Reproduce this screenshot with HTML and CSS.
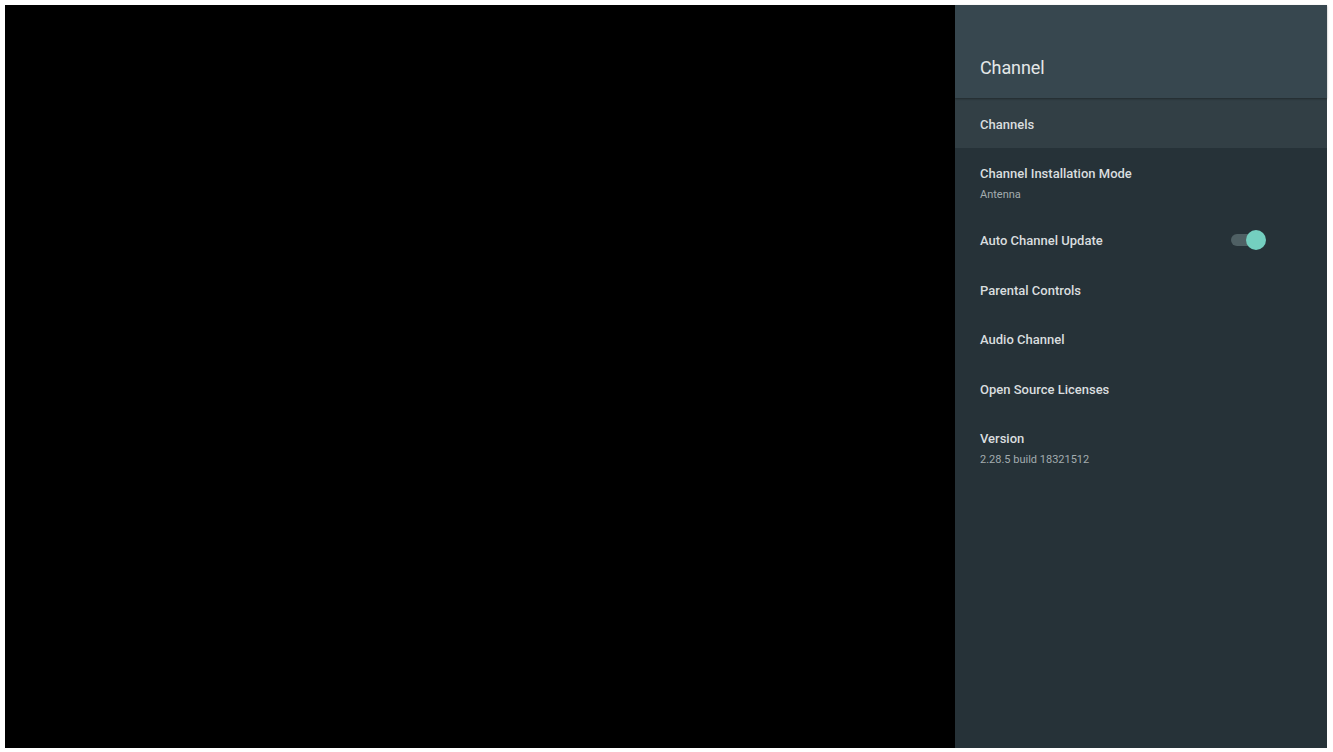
FILE: index.html
```html
<!DOCTYPE html>
<html lang="en">
<head>
    <meta charset="UTF-8">
    <title>Channel</title>
    <link rel="stylesheet" href="styles.css">
</head>
<body>
    <div class="screen">
        <div class="video"></div>
        <div class="panel">
            <div class="panel-header">
                <h2>Channel</h2>
            </div>
            <div class="menu">
                <div class="menu-item selected">
                    <div class="item-title">Channels</div>
                </div>
                <div class="menu-item two-line">
                    <div class="item-title">Channel Installation Mode</div>
                    <div class="item-sub">Antenna</div>
                </div>
                <div class="menu-item with-switch">
                    <div class="item-title">Auto Channel Update</div>
                    <div class="switch on"><span class="knob"></span></div>
                </div>
                <div class="menu-item">
                    <div class="item-title">Parental Controls</div>
                </div>
                <div class="menu-item">
                    <div class="item-title">Audio Channel</div>
                </div>
                <div class="menu-item">
                    <div class="item-title">Open Source Licenses</div>
                </div>
                <div class="menu-item two-line">
                    <div class="item-title">Version</div>
                    <div class="item-sub">2.28.5 build 18321512</div>
                </div>
            </div>
        </div>
    </div>
</body>
</html>
```

FILE: styles.css
```css
html, body {
    margin: 0;
    background: #fff;
}
body {
    padding: 5px 6px 4px 5px;
    font-family: Roboto, "Noto Sans", sans-serif;
}
.screen {
    display: flex;
    width: 1322px;
    height: 743px;
    background: #000;
}
.video {
    flex: 1;
}
.panel {
    width: 372px;
    background: #263238;
    display: flex;
    flex-direction: column;
}
.panel-header {
    height: 93px;
    background: #37474f;
    box-shadow: 0 1px 2px rgba(0,0,0,0.35);
    display: flex;
    align-items: center;
    padding: 0 25px;
    position: relative;
    z-index: 1;
}
.panel-header h2 {
    margin: 0;
    padding-top: 32px;
    font-size: 18px;
    font-weight: 400;
    color: #e3e7e8;
    letter-spacing: -0.1px;
}
.menu {
    display: flex;
    flex-direction: column;
}
.menu-item {
    height: 49.5px;
    box-sizing: border-box;
    padding: 3px 25px 0;
    display: flex;
    flex-direction: column;
    justify-content: center;
}
.menu-item.selected {
    height: 50px;
    background: #323f45;
}
.menu-item.two-line {
    height: 67px;
    padding-top: 5px;
}
.menu-item.with-switch {
    flex-direction: row;
    align-items: center;
    justify-content: space-between;
    padding-right: 66px;
}
.item-title {
    font-size: 13px;
    font-weight: 500;
    color: #d9dddf;
    line-height: 18px;
}
.item-sub {
    font-size: 11px;
    color: #a3acaf;
    line-height: 16px;
    margin-top: 4px;
}
.switch {
    position: relative;
    width: 30px;
    height: 12px;
    margin-top: -2px;
    border-radius: 6px;
    background: #4f6064;
}
.switch .knob {
    position: absolute;
    top: -4px;
    right: -5px;
    width: 20px;
    height: 20px;
    border-radius: 50%;
    background: #74cfc0;
}
```
